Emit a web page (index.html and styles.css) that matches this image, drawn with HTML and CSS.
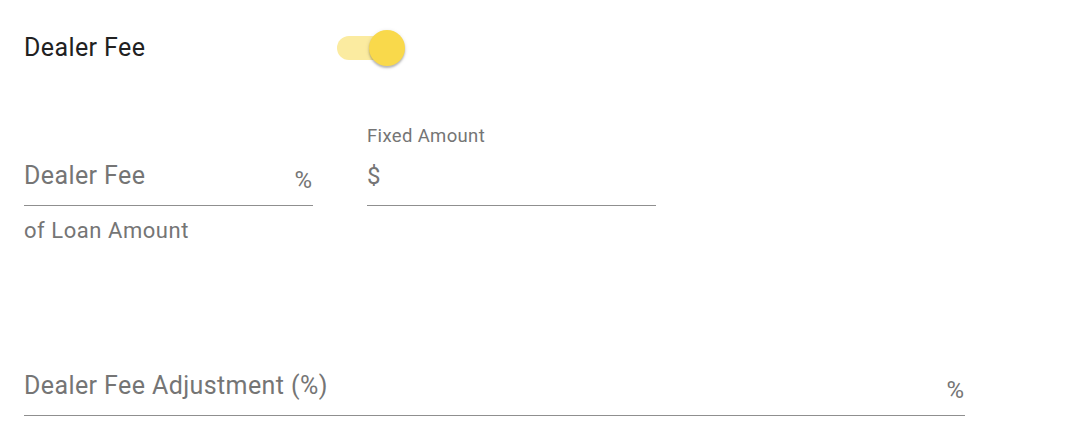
FILE: index.html
```html
<!DOCTYPE html>
<html>
<head>
<meta charset="utf-8">
<link rel="stylesheet" href="styles.css">
</head>
<body>
<div class="page">
  <div class="header">
    <div class="title">Dealer Fee</div>
    <div class="switch">
      <div class="track"></div>
      <div class="thumb"></div>
    </div>
  </div>
  <div class="fields">
    <div class="field">
      <div class="label"></div>
      <div class="input-row">
        <span class="placeholder">Dealer Fee</span>
        <span class="adorn adorn-end">%</span>
      </div>
      <div class="helper">of Loan Amount</div>
    </div>
    <div class="field">
      <div class="label">Fixed Amount</div>
      <div class="input-row">
        <span class="adorn adorn-start">$</span>
      </div>
    </div>
  </div>
  <div class="field field-wide">
    <div class="input-row">
      <span class="placeholder">Dealer Fee Adjustment (%)</span>
      <span class="adorn adorn-end">%</span>
    </div>
  </div>
</div>
</body>
</html>
```

FILE: styles.css
```css
* { box-sizing: border-box; }
html, body { margin: 0; padding: 0; background: #ffffff; }
body { font-family: Roboto, "Noto Sans", "Liberation Sans", sans-serif; }

.page {
  padding: 33px 0 0 24px;
  width: 1080px;
}

.header {
  display: flex;
  align-items: center;
  height: 30px;
}
.title {
  width: 313px;
  font-size: 25px;
  line-height: 30px;
  letter-spacing: 0.4px;
  color: #212121;
}
.switch {
  position: relative;
  width: 68px;
  height: 36px;
}
.track {
  position: absolute;
  left: 0;
  top: 6px;
  width: 61px;
  height: 24px;
  border-radius: 12px;
  background: #fbeba0;
}
.thumb {
  position: absolute;
  right: 0;
  top: 0;
  width: 36px;
  height: 36px;
  border-radius: 50%;
  background: #f9d94b;
  box-shadow: 0 2px 2px rgba(0,0,0,0.22), 0 1px 4px rgba(0,0,0,0.12);
}

.fields {
  display: flex;
  gap: 54px;
  margin-top: 61px;
}
.field { width: 289px; }
.field-wide { width: 941px; margin-top: 127px; }

.label {
  height: 24px;
  font-size: 18.5px;
  line-height: 24px;
  letter-spacing: 0.35px;
  color: #757575;
  margin-bottom: 13px;
}
.input-row {
  display: flex;
  align-items: flex-start;
  justify-content: space-between;
  height: 45px;
  padding-bottom: 14px;
  border-bottom: 1px solid #8f8f8f;
}
.placeholder {
  font-size: 25px;
  line-height: 30px;
  letter-spacing: 0.4px;
  color: #757575;
}
.adorn {
  font-size: 24px;
  line-height: 30px;
  color: #757575;
}
.adorn-end { margin-top: 4px; margin-right: 1px; }
.adorn-start { margin-top: 0; }

.helper {
  margin-top: 12px;
  font-size: 22px;
  line-height: 26px;
  letter-spacing: 0.55px;
  color: #757575;
}
```
